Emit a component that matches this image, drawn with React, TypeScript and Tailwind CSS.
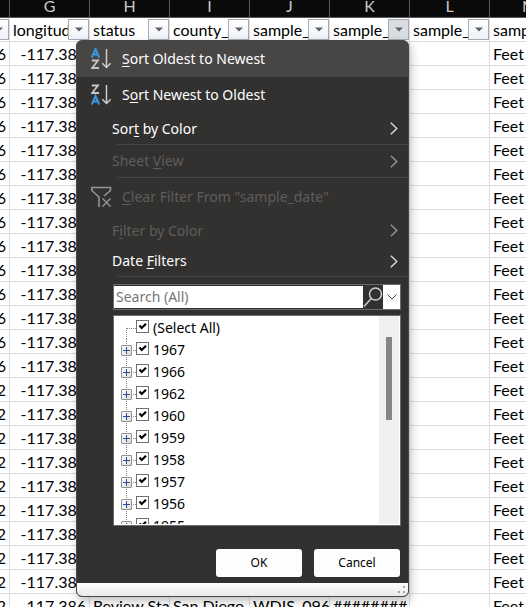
import type { ReactNode } from "react";

const columns = [
  { letter: "G", title: "longitude" },
  { letter: "H", title: "status" },
  { letter: "I", title: "county_name" },
  { letter: "J", title: "sample_id" },
  { letter: "K", title: "sample_date", active: true },
  { letter: "L", title: "sample_time" },
  { letter: "M", title: "sample_depth" },
];

const rows = Array.from({ length: 24 }, (_, i) => ({
  lead: i < 14 ? "6" : "2",
  cells: ["-117.386", "Review Status", "San Diego", "WDIS_0967", "########", "", "Feet"],
}));

const years = ["1967", "1966", "1962", "1960", "1959", "1958", "1957", "1956", "1955"];

function FilterButton({ label, active }: { label: string; active?: boolean }) {
  return (
    <button
      aria-label={`Filter ${label}`}
      className={`flex size-[21px] shrink-0 items-center justify-center border border-[#a3abb8] ${
        active ? "bg-[#d9dce1]" : "bg-linear-to-b from-white to-[#eef1f6]"
      }`}
    >
      <svg width="8" height="5" viewBox="0 0 8 5" aria-hidden="true">
        <path d="M0 0.5H8L4 4.5Z" fill="#5f6368" />
      </svg>
    </button>
  );
}

function Sheet() {
  return (
    <table className="w-[570px] table-fixed border-separate border-spacing-0 font-['Lato',sans-serif] text-base text-black">
      <colgroup>
        <col className="w-[10px]" />
        {columns.map((c) => (
          <col key={c.letter} className="w-20" />
        ))}
      </colgroup>
      <thead>
        <tr className="h-[18px] bg-[#0a0a0a] text-[#c9c9c9]">
          <th className="border-r border-b border-[#5a5a5a] p-0" />
          {columns.map((c) => (
            <th
              key={c.letter}
              className="border-r border-b border-[#5a5a5a] p-0 align-top text-base leading-3 font-normal"
            >
              {c.letter}
            </th>
          ))}
        </tr>
        <tr className="h-6">
          <th className="overflow-hidden border-r border-b border-[#dcdcdc] p-0">
            <div className="flex justify-end">
              <FilterButton label="column F" />
            </div>
          </th>
          {columns.map((c) => (
            <th key={c.letter} className="border-r border-b border-[#dcdcdc] p-0 font-normal">
              <div className="flex items-center pl-[3px]">
                <span className="min-w-0 flex-1 overflow-hidden text-left leading-[21px] whitespace-nowrap">
                  {c.title}
                </span>
                <FilterButton label={c.title} active={c.active} />
              </div>
            </th>
          ))}
        </tr>
      </thead>
      <tbody>
        {rows.map((row, i) => (
          <tr key={i} className="h-6">
            <td className="border-r border-b border-[#dcdcdc] p-0">
              <div className="flex justify-end overflow-hidden pr-[3px] leading-[23px]">{row.lead}</div>
            </td>
            {row.cells.map((cell, j) => (
              <td key={j} className="border-r border-b border-[#dcdcdc] p-0">
                <div
                  className={`h-[23px] overflow-hidden leading-[23px] whitespace-nowrap ${
                    j === 0 ? "pr-[3px] text-right" : "pl-[3px]"
                  }`}
                >
                  {cell}
                </div>
              </td>
            ))}
          </tr>
        ))}
      </tbody>
    </table>
  );
}

function Key({ children }: { children: ReactNode }) {
  return <span className="underline underline-offset-2">{children}</span>;
}

function SortIcon({ descending }: { descending?: boolean }) {
  const a = descending ? "translate(0 11)" : "translate(0 0)";
  const z = descending ? "translate(0 0)" : "translate(0 11)";
  return (
    <svg width="21" height="22" viewBox="0 0 21 22" fill="none" aria-hidden="true">
      <path transform={a} d="M0.8 9.5L4.5 1L8.2 9.5M2.2 6.5H6.8" stroke="#3a96dd" strokeWidth="2" />
      <path transform={z} d="M0.8 1.5H7L1.2 9H8" stroke="#c8c6c4" strokeWidth="1.8" />
      <path d="M15.5 1V19.5M11.3 15.3L15.5 19.5L19.7 15.3" stroke="#d0cecc" strokeWidth="1.5" />
    </svg>
  );
}

function ClearFilterIcon() {
  return (
    <svg width="21" height="22" viewBox="0 0 21 22" fill="none" stroke="#979593" aria-hidden="true">
      <path d="M13 10L19.5 4.5V1.5H0.8V4.5L8 11V21" strokeWidth="1.6" />
      <path d="M11.5 12.5L19.5 20.5M19.5 12.5L11.5 20.5" strokeWidth="1.4" />
    </svg>
  );
}

function Chevron({ dim }: { dim?: boolean }) {
  return (
    <svg width="8" height="13" viewBox="0 0 8 13" fill="none" className={dim ? "text-[#979593]" : "text-[#dddbd9]"} aria-hidden="true">
      <path d="M0.8 0.8L6.8 6.5L0.8 12.2" stroke="currentColor" strokeWidth="1.4" />
    </svg>
  );
}

function Item({
  children,
  icon,
  submenu,
  disabled,
  className,
}: {
  children: ReactNode;
  icon?: ReactNode;
  submenu?: boolean;
  disabled?: boolean;
  className: string;
}) {
  return (
    <button
      disabled={disabled}
      className={`flex w-full items-center pr-2.5 text-left ${icon ? "pl-3.5" : "pl-[35px]"} ${
        disabled ? "text-[#5f5d5b]" : "text-white"
      } ${className}`}
    >
      {icon && <span className="mr-2.5 shrink-0">{icon}</span>}
      <span className="flex-1 whitespace-nowrap">{children}</span>
      {submenu && <Chevron dim={disabled} />}
    </button>
  );
}

function Separator() {
  return <div className="ml-10 h-px bg-[#484644]" />;
}

function TreeRow({ label, root }: { label: string; root?: boolean }) {
  return (
    <li className="flex h-[22px] items-center pl-[7px]">
      <span className="grid w-[15px] shrink-0 items-center">
        <svg width="15" height="22" viewBox="0 0 15 22" className="col-start-1 row-start-1" fill="none" stroke="#808080" strokeDasharray="1 1" aria-hidden="true">
          <path d={root ? "M5.5 11V22" : "M5.5 0V22"} />
          <path d="M6 11.5H15" />
        </svg>
        {!root && (
          <button
            aria-label={`Expand ${label}`}
            className="col-start-1 row-start-1 flex size-[11px] items-center justify-center rounded-[1px] border border-[#919191] bg-linear-to-br from-white to-[#dcdcdc]"
          >
            <svg width="7" height="7" viewBox="0 0 7 7" stroke="#2f4c9c" aria-hidden="true">
              <path d="M0 3.5H7M3.5 0V7" />
            </svg>
          </button>
        )}
      </span>
      <label className="flex items-center gap-1">
        <span className="mb-1 grid">
          <input
            type="checkbox"
            defaultChecked
            className="peer col-start-1 row-start-1 size-[13px] appearance-none border border-[#707070] bg-white"
          />
          <svg width="13" height="13" viewBox="0 0 13 13" className="pointer-events-none invisible col-start-1 row-start-1 peer-checked:visible" aria-hidden="true">
            <path d="M3.5 5.5L5.7 8L10 3.7" fill="none" stroke="#000" strokeWidth="2.2" />
          </svg>
        </span>
        {label}
      </label>
    </li>
  );
}

function FilterMenu() {
  return (
    <div className="absolute top-10 left-[76px] w-[333px] overflow-hidden rounded-md border border-[#4a4846] bg-[#323130] font-['Noto_Sans','Open_Sans',sans-serif] text-sm shadow-[2px_4px_10px_rgba(0,0,0,0.25)]">
      <Item icon={<SortIcon />} className="h-9 bg-[#484644]">
        <Key>S</Key>ort Oldest to Newest
      </Item>
      <Item icon={<SortIcon descending />} className="h-9">
        S<Key>o</Key>rt Newest to Oldest
      </Item>
      <Item submenu className="h-[31px]">
        Sor<Key>t</Key> by Color
      </Item>
      <Separator />
      <Item submenu disabled className="h-8">
        Sheet <Key>V</Key>iew
      </Item>
      <Separator />
      <Item icon={<ClearFilterIcon />} disabled className="h-[37px]">
        <Key>C</Key>lear Filter From "sample_date"
      </Item>
      <Item submenu disabled className="h-[31px]">
        F<Key>i</Key>lter by Color
      </Item>
      <Item submenu className="h-[30px]">
        Date <Key>F</Key>ilters
      </Item>
      <Separator />

      <div className="mt-[7px] mr-[7px] ml-9 flex h-[26px] border border-[#6e6c6a]">
        <input
          type="text"
          aria-label="Search"
          placeholder="Search (All)"
          className="my-px min-w-0 flex-1 bg-white px-0.5 text-black outline-none placeholder:text-[#767676]"
        />
        <button aria-label="Search" className="flex w-5 items-center justify-center">
          <svg width="20" height="21" viewBox="0 0 20 21" fill="none" stroke="#d0cecc" strokeWidth="1.5" aria-hidden="true">
            <circle cx="12.5" cy="7" r="6" />
            <path d="M8.2 11.5L1 19.5" />
          </svg>
        </button>
        <button aria-label="Search options" className="flex w-[17px] items-center justify-center bg-white">
          <svg width="10" height="6" viewBox="0 0 10 6" fill="none" stroke="#444" aria-hidden="true">
            <path d="M0.5 0.5L5 5L9.5 0.5" />
          </svg>
        </button>
      </div>

      <div className="mt-[5px] mr-[7px] ml-9 flex h-[211px] border border-[#6e6c6a] bg-white pr-px pb-px">
        <ul className="h-full flex-1 overflow-hidden pt-px text-black">
          <TreeRow label="(Select All)" root />
          {years.map((y) => (
            <TreeRow key={y} label={y} />
          ))}
        </ul>
        <div className="w-5 bg-[#f0f0f0] pt-[21px]">
          <div className="mx-auto h-[83px] w-1.5 bg-[#858585]" />
        </div>
      </div>

      <div className="mt-[23px] mr-2 flex justify-end gap-3 text-xs text-black">
        <button className="h-7 w-[86px] rounded-[3px] bg-[#fdfdfd]">OK</button>
        <button className="h-7 w-[86px] rounded-[3px] bg-[#fdfdfd]">Cancel</button>
      </div>

      <div className="mt-1.5 flex h-[13px] items-end justify-end bg-linear-to-b from-white to-[#e9eaee] p-0.5">
        <svg width="8" height="8" viewBox="0 0 8 8" fill="#a9a9a9" aria-hidden="true">
          <path d="M5 0H7V2H5ZM5 5H7V7H5ZM0 5H2V7H0Z" />
        </svg>
      </div>
    </div>
  );
}

export default function App() {
  return (
    <main className="relative h-screen w-full overflow-hidden bg-white">
      <Sheet />
      <FilterMenu />
    </main>
  );
}
